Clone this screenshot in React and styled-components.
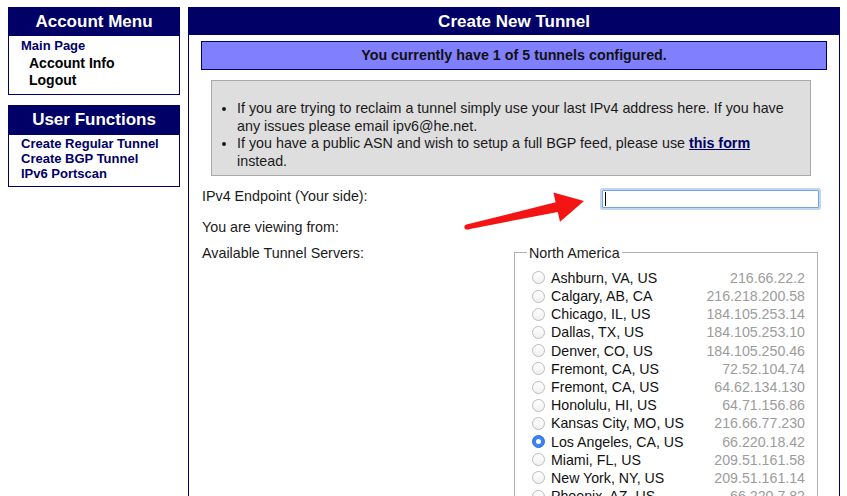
import React from "react";
import styled, { createGlobalStyle } from "styled-components";

const NAVY = "#000066";

const Global = createGlobalStyle`
  html, body { margin: 0; padding: 0; overflow: hidden; background: #fff; }
  body { font-family: "Liberation Sans", Arial, Helvetica, sans-serif; color: #1a1a1a; }
`;

const Page = styled.div`
  position: relative;
  display: flex;
  align-items: flex-start;
  gap: 8px;
  padding: 7px 8px 0 8px;
  width: 847px;
  height: 496px;
  box-sizing: border-box;
`;

const Sidebar = styled.div`
  width: 172px;
  display: flex;
  flex-direction: column;
  gap: 10px;
  flex-shrink: 0;
`;

const MenuBox = styled.div`
  border: 1px solid ${NAVY};
  background: #fff;
`;

const MenuHeader = styled.div`
  background: ${NAVY};
  color: #fff;
  font-weight: bold;
  font-size: 17px;
  text-align: center;
  height: ${(p) => p.$h}px;
  line-height: ${(p) => p.$h}px;
  margin-top: -1px;
`;

const MenuList = styled.div`
  display: flex;
  flex-direction: column;
  padding: ${(p) => p.$pad};
`;

const MenuLink = styled.a`
  display: block;
  font-size: ${(p) => (p.$sub ? 14 : 13)}px;
  font-weight: bold;
  line-height: ${(p) => p.$lh}px;
  color: ${(p) => (p.$sub ? "#000" : NAVY)};
  padding-left: ${(p) => (p.$sub ? 20 : 12)}px;
  text-decoration: none;
`;

const Main = styled.div`
  width: 652px;
  box-sizing: border-box;
  border: 1px solid ${NAVY};
  border-top: none;
  min-height: 600px;
  flex-shrink: 0;
`;

const MainHeader = styled.div`
  background: ${NAVY};
  color: #fff;
  font-weight: bold;
  font-size: 17px;
  text-align: center;
  height: 28px;
  line-height: 29px;
  margin: 0 -1px;
`;

const Notice = styled.div`
  margin: 6px 12px 0 12px;
  height: 29px;
  box-sizing: border-box;
  border: 1px solid ${NAVY};
  background: #8080ff;
  color: #111;
  font-weight: bold;
  font-size: 14.3px;
  text-align: center;
  line-height: 27px;
`;

const InfoBox = styled.div`
  margin: 10px 0 0 22px;
  width: 600px;
  box-sizing: border-box;
  border: 1px solid #a9a9a9;
  background: #dedede;
  padding: 19px 14px 4px 0;
`;

const InfoList = styled.ul`
  margin: 0;
  padding-left: 25px;
  font-size: 14.3px;
  line-height: 17.7px;
  color: #1a1a1a;
`;

const FormLink = styled.a`
  color: ${NAVY};
  font-weight: bold;
  text-decoration: underline;
`;

const FormRow = styled.div`
  display: flex;
  align-items: flex-start;
  justify-content: space-between;
  padding-left: 13px;
  margin-top: ${(p) => p.$mt}px;
`;

const Label = styled.span`
  font-size: 14.3px;
  line-height: 18px;
  color: #1a1a1a;
`;

const InputWrap = styled.span`
  position: relative;
  display: block;
  margin: 3px 20px 0 0;
`;

const TextInput = styled.input`
  display: block;
  width: 217px;
  height: 18px;
  box-sizing: border-box;
  border: 1px solid #79a3dc;
  border-radius: 1px;
  box-shadow: 0 0 0 2px rgba(140, 180, 235, 0.55);
  outline: none;
  padding: 0 3px;
  font-size: 13px;
  background: #fff;
`;

const Caret = styled.span`
  position: absolute;
  left: 3px;
  top: 2px;
  width: 1px;
  height: 14px;
  background: #000;
`;

const ServerSet = styled.fieldset`
  margin: 0 21px 0 0;
  width: 304px;
  box-sizing: border-box;
  border: 1px solid #b0b0b0;
  padding: 7px 12px 0 12px;
  min-width: 0;
`;

const Legend = styled.legend`
  font-size: 14.3px;
  line-height: 18px;
  padding: 0 2px;
  color: #1a1a1a;
`;

const ServerRow = styled.label`
  display: flex;
  align-items: center;
  justify-content: space-between;
  height: 18.2px;
  font-size: 14.2px;
`;

const ServerName = styled.span`
  display: flex;
  align-items: center;
  gap: 6px;
  color: #111;
`;

const Radio = styled.input.attrs({ type: "radio" })`
  appearance: none;
  -webkit-appearance: none;
  margin: 0 0 0 5px;
  width: 13px;
  height: 13px;
  border-radius: 50%;
  box-sizing: border-box;
  border: 1px solid #bcbcbc;
  background: linear-gradient(#ffffff, #f0f0f0);
  position: relative;
  flex-shrink: 0;
  &:checked {
    border-color: #2a6fe0;
    background: #3a82f6;
  }
  &:checked::after {
    content: "";
    position: absolute;
    left: 3px;
    top: 3px;
    width: 5px;
    height: 5px;
    border-radius: 50%;
    background: #fff;
  }
`;

const ServerIP = styled.span`
  color: #9c9c9c;
`;

const Annotation = styled.svg`
  position: absolute;
  left: 0;
  top: 0;
  width: 847px;
  height: 496px;
  pointer-events: none;
`;

const servers = [
  ["Ashburn, VA, US", "216.66.22.2"],
  ["Calgary, AB, CA", "216.218.200.58"],
  ["Chicago, IL, US", "184.105.253.14"],
  ["Dallas, TX, US", "184.105.253.10"],
  ["Denver, CO, US", "184.105.250.46"],
  ["Fremont, CA, US", "72.52.104.74"],
  ["Fremont, CA, US", "64.62.134.130"],
  ["Honolulu, HI, US", "64.71.156.86"],
  ["Kansas City, MO, US", "216.66.77.230"],
  ["Los Angeles, CA, US", "66.220.18.42"],
  ["Miami, FL, US", "209.51.161.58"],
  ["New York, NY, US", "209.51.161.14"],
  ["Phoenix, AZ, US", "66.220.7.82"],
];

export default function App() {
  return (
    <>
      <Global />
      <Page>
        <Sidebar>
          <MenuBox>
            <MenuHeader $h={29}>Account Menu</MenuHeader>
            <MenuList $pad="1px 0 4px 0">
              <MenuLink $lh={17.5} href="#">Main Page</MenuLink>
              <MenuLink $lh={17.5} $sub href="#">Account Info</MenuLink>
              <MenuLink $lh={17.5} $sub href="#">Logout</MenuLink>
            </MenuList>
          </MenuBox>
          <MenuBox>
            <MenuHeader $h={30}>User Functions</MenuHeader>
            <MenuList $pad="1px 0 5px 0">
              <MenuLink $lh={15.3} href="#">Create Regular Tunnel</MenuLink>
              <MenuLink $lh={15.3} href="#">Create BGP Tunnel</MenuLink>
              <MenuLink $lh={15.3} href="#">IPv6 Portscan</MenuLink>
            </MenuList>
          </MenuBox>
        </Sidebar>

        <Main>
          <MainHeader>Create New Tunnel</MainHeader>
          <Notice>You currently have 1 of 5 tunnels configured.</Notice>
          <InfoBox>
            <InfoList>
              <li>
                If you are trying to reclaim a tunnel simply use your last IPv4 address here. If you
                have any issues please email ipv6@he.net.
              </li>
              <li>
                If you have a public ASN and wish to setup a full BGP feed, please use{" "}
                <FormLink href="#">this form</FormLink> instead.
              </li>
            </InfoList>
          </InfoBox>

          <FormRow $mt={11}>
            <Label>IPv4 Endpoint (Your side):</Label>
            <InputWrap>
              <TextInput type="text" />
              <Caret />
            </InputWrap>
          </FormRow>

          <FormRow $mt={10}>
            <Label>You are viewing from:</Label>
          </FormRow>

          <FormRow $mt={8}>
            <Label>Available Tunnel Servers:</Label>
            <ServerSet>
              <Legend>North America</Legend>
              {servers.map(([name, ip], i) => (
                <ServerRow key={i}>
                  <ServerName>
                    <Radio name="server" defaultChecked={name.startsWith("Los Angeles")} />
                    {name}
                  </ServerName>
                  <ServerIP>{ip}</ServerIP>
                </ServerRow>
              ))}
            </ServerSet>
          </FormRow>
        </Main>

        <Annotation viewBox="0 0 847 496">
          <circle cx="467" cy="227" r="2.6" fill="#f41414" />
          <polygon
            fill="#f41414"
            points="466.5,224.6 555.6,202.2 553.4,192.5 584,201 560,221.7 557.8,212 467.5,229.4"
          />
        </Annotation>
      </Page>
    </>
  );
}
